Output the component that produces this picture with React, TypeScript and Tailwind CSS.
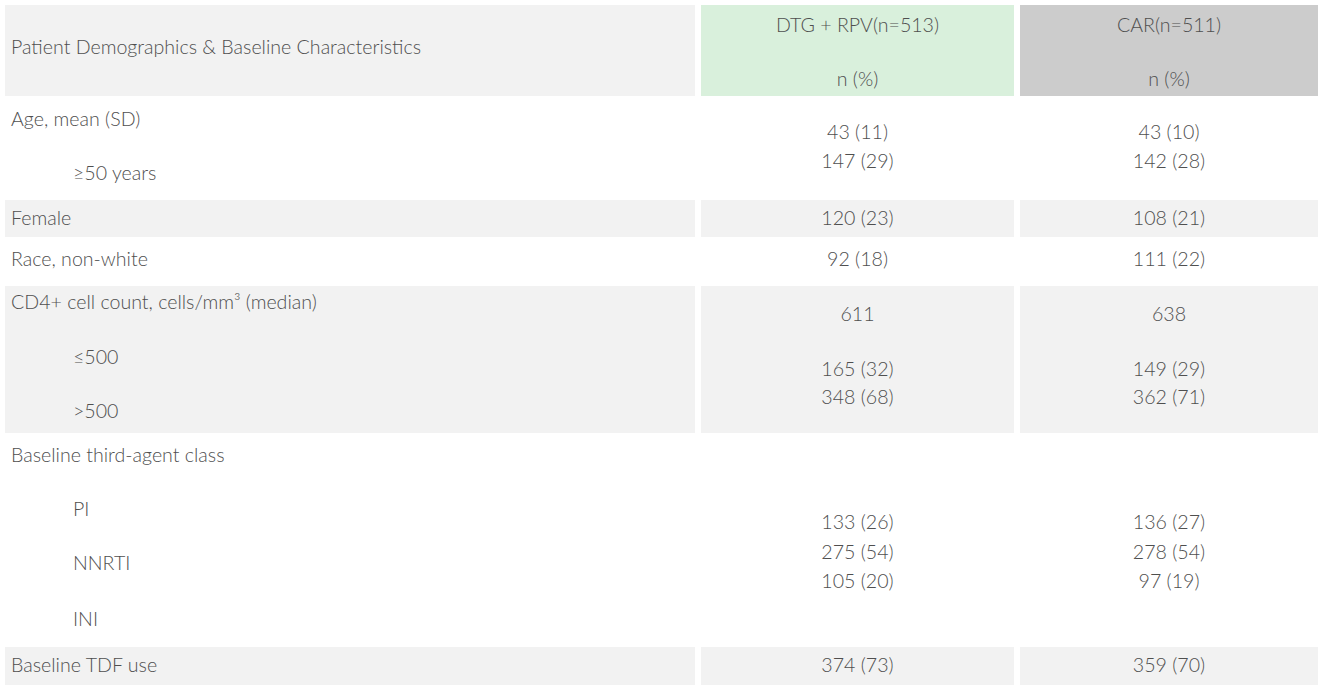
const font = { fontFamily: "Lato, 'Open Sans', 'Liberation Sans', sans-serif" };

const Cell = ({ children, className = "" }: { children?: React.ReactNode; className?: string }) => (
  <div className={`h-full ${className}`}>{children}</div>
);

export default function App() {
  return (
    <div className="w-[1325px] h-[693px] bg-white text-[#4f4f4f] text-[19.6px] font-light leading-none" style={font}>
      <div className="pl-[5px] pt-[5px] flex flex-col gap-[3px]">
        {/* header */}
        <div className="grid grid-cols-[690px_313px_298px] gap-x-[6px] h-[91px]">
          <Cell className="bg-[#f2f2f2] flex items-center pl-[6px] pb-[7px]">
            <span>Patient Demographics &amp; Baseline Characteristics</span>
          </Cell>
          <Cell className="bg-[#d9f0dc] flex flex-col items-center pt-[10px]">
            <span>DTG + RPV(n=513)</span>
            <span className="mt-[34px]">n (%)</span>
          </Cell>
          <Cell className="bg-[#cccccc] flex flex-col items-center pt-[10px]">
            <span>CAR(n=511)</span>
            <span className="mt-[34px]">n (%)</span>
          </Cell>
        </div>

        {/* age */}
        <div className="grid grid-cols-[690px_313px_298px] gap-x-[6px] h-[98px]">
          <Cell className="pl-[6px] pt-[10px]">
            <div>Age, mean (SD)</div>
            <div className="pl-[62px] mt-[34px]">≥50 years</div>
          </Cell>
          <Cell className="flex flex-col items-center pt-[23px] gap-[9px]">
            <span>43 (11)</span>
            <span>147 (29)</span>
          </Cell>
          <Cell className="flex flex-col items-center pt-[23px] gap-[9px]">
            <span>43 (10)</span>
            <span>142 (28)</span>
          </Cell>
        </div>

        {/* female */}
        <div className="grid grid-cols-[690px_313px_298px] gap-x-[6px] h-[37px]">
          <Cell className="bg-[#f2f2f2] flex items-center pl-[6px] pb-[2px]">Female</Cell>
          <Cell className="bg-[#f2f2f2] flex items-center justify-center pb-[2px]">120 (23)</Cell>
          <Cell className="bg-[#f2f2f2] flex items-center justify-center pb-[2px]">108 (21)</Cell>
        </div>

        {/* race */}
        <div className="grid grid-cols-[690px_313px_298px] gap-x-[6px] h-[43px]">
          <Cell className="pl-[6px] pt-[9px]">Race, non-white</Cell>
          <Cell className="flex justify-center pt-[9px]">92 (18)</Cell>
          <Cell className="flex justify-center pt-[9px]">111 (22)</Cell>
        </div>

        {/* cd4 */}
        <div className="grid grid-cols-[690px_313px_298px] gap-x-[6px] h-[147px]">
          <Cell className="bg-[#f2f2f2] pl-[6px] pt-[6px]">
            <div>CD4+ cell count, cells/mm³ (median)</div>
            <div className="pl-[62px] mt-[35px]">≤500</div>
            <div className="pl-[62px] mt-[35px]">&gt;500</div>
          </Cell>
          <Cell className="bg-[#f2f2f2] flex flex-col items-center pt-[18px]">
            <span>611</span>
            <span className="mt-[35px]">165 (32)</span>
            <span className="mt-[9px]">348 (68)</span>
          </Cell>
          <Cell className="bg-[#f2f2f2] flex flex-col items-center pt-[18px]">
            <span>638</span>
            <span className="mt-[35px]">149 (29)</span>
            <span className="mt-[9px]">362 (71)</span>
          </Cell>
        </div>

        {/* third agent */}
        <div className="grid grid-cols-[690px_313px_298px] gap-x-[6px] h-[208px]">
          <Cell className="pl-[6px] pt-[9px]">
            <div>Baseline third-agent class</div>
            <div className="pl-[62px] mt-[34px]">PI</div>
            <div className="pl-[62px] mt-[35px]">NNRTI</div>
            <div className="pl-[62px] mt-[36px]">INI</div>
          </Cell>
          <Cell className="flex flex-col items-center pt-[76px] gap-[10px]">
            <span>133 (26)</span>
            <span>275 (54)</span>
            <span>105 (20)</span>
          </Cell>
          <Cell className="flex flex-col items-center pt-[76px] gap-[10px]">
            <span>136 (27)</span>
            <span>278 (54)</span>
            <span>97 (19)</span>
          </Cell>
        </div>

        {/* tdf */}
        <div className="grid grid-cols-[690px_313px_298px] gap-x-[6px] h-[38px]">
          <Cell className="bg-[#f2f2f2] flex items-center pl-[6px] pb-[2px]">Baseline TDF use</Cell>
          <Cell className="bg-[#f2f2f2] flex items-center justify-center pb-[2px]">374 (73)</Cell>
          <Cell className="bg-[#f2f2f2] flex items-center justify-center pb-[2px]">359 (70)</Cell>
        </div>
      </div>
    </div>
  );
}
